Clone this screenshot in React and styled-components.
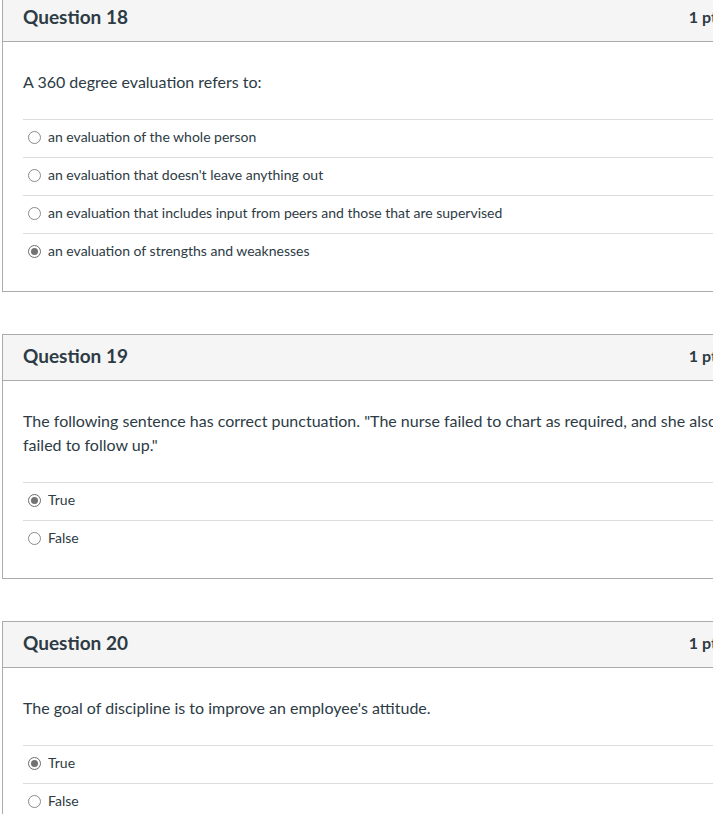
import React from 'react';
import styled, { createGlobalStyle } from 'styled-components';

const GlobalStyle = createGlobalStyle`
  html, body {
    margin: 0;
    padding: 0;
    background: #fff;
    overflow: hidden;
  }
  body {
    font-family: Lato, "Liberation Sans", Arial, sans-serif;
    color: #2d3b45;
  }
`;

const Page = styled.div`
  padding-left: 2px;
  margin-top: -5px;
  width: 760px;
`;

const Card = styled.div`
  width: 740px;
  box-sizing: border-box;
  border: 1px solid #ababab;
  margin-bottom: 42px;
`;

const Header = styled.div`
  height: 46px;
  box-sizing: border-box;
  display: flex;
  align-items: center;
  justify-content: space-between;
  padding: 0 17px 4px 20px;
  background: #f5f5f5;
  border-bottom: 1px solid #ababab;
`;

const Title = styled.h2`
  margin: 0;
  font-size: 19px;
  font-weight: 700;
  color: #2d3b45;
`;

const Points = styled.span`
  font-size: 16px;
  font-weight: 700;
  color: #2d3b45;
`;

const Body = styled.div`
  padding: 28px 20px 20px;
`;

const Prompt = styled.p`
  margin: 0 0 25px;
  font-size: 16px;
  line-height: 24px;
`;

const Answer = styled.div`
  height: 33px;
  display: flex;
  align-items: center;
  gap: 7px;
  padding: 0 0 4px 5px;
  border-top: 1px solid #dcdcdc;
  font-size: 14px;
  color: #2d3b45;
`;

const Radio = styled.span`
  width: 13px;
  height: 13px;
  box-sizing: border-box;
  border-radius: 50%;
  border: 1px solid ${({ checked }) => (checked ? '#6d6d6d' : '#8a8a8a')};
  background: #fff;
  display: flex;
  align-items: center;
  justify-content: center;
  flex-shrink: 0;
  margin-top: 1px;

  &::after {
    content: '';
    display: ${({ checked }) => (checked ? 'block' : 'none')};
    width: 7px;
    height: 7px;
    border-radius: 50%;
    background: #737373;
  }
`;

const questions = [
  {
    number: 18,
    prompt: 'A 360 degree evaluation refers to:',
    answers: [
      'an evaluation of the whole person',
      "an evaluation that doesn't leave anything out",
      'an evaluation that includes input from peers and those that are supervised',
      'an evaluation of strengths and weaknesses',
    ],
    selected: 3,
  },
  {
    number: 19,
    prompt:
      'The following sentence has correct punctuation. "The nurse failed to chart as required, and she also failed to follow up."',
    answers: ['True', 'False'],
    selected: 0,
  },
  {
    number: 20,
    prompt: "The goal of discipline is to improve an employee's attitude.",
    answers: ['True', 'False'],
    selected: 0,
  },
];

export default function App() {
  return (
    <>
      <GlobalStyle />
      <Page>
        {questions.map(({ number, prompt, answers, selected }) => (
          <Card key={number}>
            <Header>
              <Title>Question {number}</Title>
              <Points>1 pts</Points>
            </Header>
            <Body>
              <Prompt>{prompt}</Prompt>
              {answers.map((answer, i) => (
                <Answer key={answer}>
                  <Radio checked={i === selected} />
                  <span>{answer}</span>
                </Answer>
              ))}
            </Body>
          </Card>
        ))}
      </Page>
    </>
  );
}
